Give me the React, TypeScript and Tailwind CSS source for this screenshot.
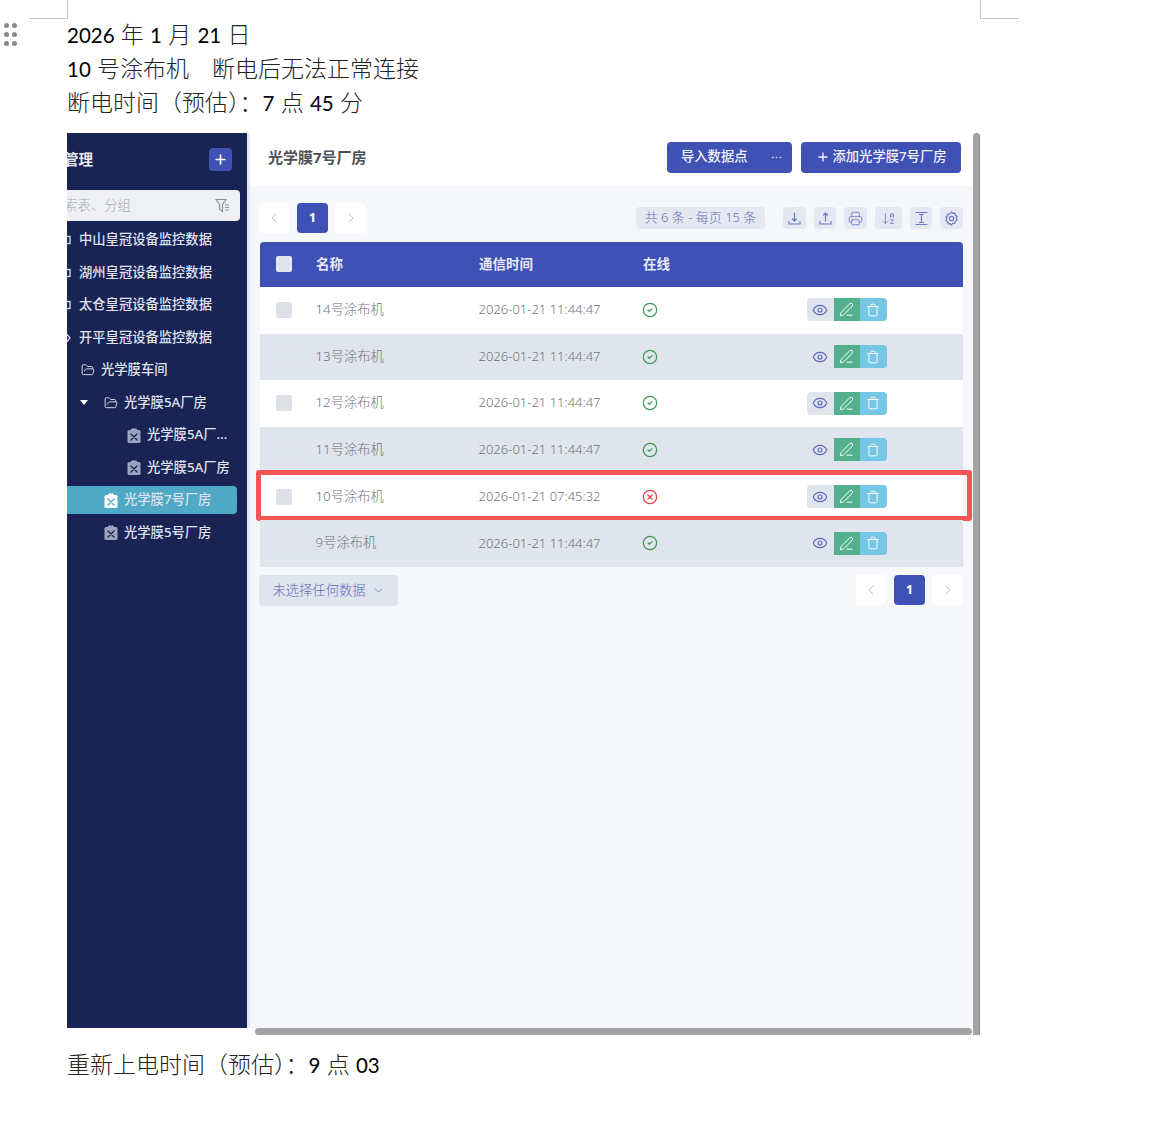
import {
  ArrowDownAZ,
  ChevronDown,
  ChevronLeft,
  ChevronRight,
  CircleCheck,
  CircleX,
  Ellipsis,
  Eye,
  FolderOpen,
  PenLine,
  Plus,
  Printer,
  Trash,
} from 'lucide-react';

const cjk = "font-['Noto_Sans','Noto_Sans_CJK_SC',sans-serif]";

const machines = [
  {name: '14号涂布机', time: '2026-01-21 11:44:47', online: true},
  {name: '13号涂布机', time: '2026-01-21 11:44:47', online: true},
  {name: '12号涂布机', time: '2026-01-21 11:44:47', online: true},
  {name: '11号涂布机', time: '2026-01-21 11:44:47', online: true},
  {name: '10号涂布机', time: '2026-01-21 07:45:32', online: false},
  {name: '9号涂布机', time: '2026-01-21 11:44:47', online: true},
];

function Num({children}: {children: React.ReactNode}) {
  return <span className="text-[20.5px] leading-none font-normal text-black">{children}</span>;
}

function TaskIcon({active}: {active?: boolean}) {
  const x = active ? '#4fa9c6' : '#1a2454';
  const fill = active ? '#ffffff' : '#9ea3be';
  return (
    <svg width="14" height="15" viewBox="0 0 14 15" className="shrink-0">
      <rect x="0.5" y="2" width="13" height="13" rx="1.5" fill={fill} />
      <rect x="4" y="0.5" width="6" height="3" rx="1" fill={fill} />
      <path d="M4 6l6 6M10 6l-6 6" stroke={x} strokeWidth="1.4" strokeLinecap="round" />
    </svg>
  );
}

function Folder() {
  return <FolderOpen size={14} strokeWidth={1.6} className="shrink-0 text-[#dfe2ee]" />;
}

function ClippedIcon({arrow}: {arrow?: boolean}) {
  return (
    <svg width="14" height="14" viewBox="0 0 14 14" fill="none" stroke="#dfe2ee" strokeWidth="1.3" className="shrink-0">
      {arrow ? <path d="M5 3.5h5l3 3.5-3 3.5H5z" /> : <rect x="5" y="3.5" width="8" height="7" />}
    </svg>
  );
}

function TreeLabel({children}: {children: React.ReactNode}) {
  return <span className="text-[13.3px] font-medium text-[#dfe2ee] whitespace-nowrap">{children}</span>;
}

function Sidebar() {
  return (
    <aside className="w-[180px] shrink-0 bg-[#1a2454] overflow-hidden">
      <div className="h-[57px] flex items-center justify-between pr-[15px] pb-[4px]">
        <span className="text-[14.5px] font-bold text-[#e8eaf4] -ml-[3px]">管理</span>
        <span className="w-[23px] h-[23px] rounded bg-[#3f51b5] flex items-center justify-center">
          <Plus size={15} strokeWidth={2.6} className="text-white" />
        </span>
      </div>
      <div className="w-[173px] h-[31px] bg-[#eef0f3] rounded-r flex items-center justify-between pr-[9px] overflow-hidden">
        <span className="text-[13.3px] text-[#a9acb3] whitespace-nowrap -ml-[16px]">搜索表、分组</span>
        <svg width="16" height="15" viewBox="0 0 16 15" fill="none" stroke="#8d9097" strokeWidth="1.2">
          <path d="M1 1.5h10L7.5 6.5v7l-3-2v-5z" />
          <path d="M10 7h4M10 9.5h4M10 12h4" />
        </svg>
      </div>
      <div className="pt-[3px] flex flex-col">
        {['中山皇冠设备监控数据', '湖州皇冠设备监控数据', '太仓皇冠设备监控数据', '开平皇冠设备监控数据'].map((label, i) => (
          <div key={label} className="h-[32.5px] flex items-center gap-[8px] -ml-[10px]">
            <ClippedIcon arrow={i === 3} />
            <TreeLabel>{label}</TreeLabel>
          </div>
        ))}
        <div className="h-[32.5px] flex items-center gap-[6px] pl-[14px]">
          <Folder />
          <TreeLabel>光学膜车间</TreeLabel>
        </div>
        <div className="h-[32.5px] flex items-center gap-[6px] pl-[13px]">
          <span className="w-[18px] flex">
            <span className="w-0 h-0 border-x-[4px] border-x-transparent border-t-[5px] border-t-white" />
          </span>
          <Folder />
          <TreeLabel>光学膜5A厂房</TreeLabel>
        </div>
        <div className="h-[32.5px] flex items-center gap-[6px] pl-[60px]">
          <TaskIcon />
          <TreeLabel>光学膜5A厂…</TreeLabel>
        </div>
        <div className="h-[32.5px] flex items-center gap-[6px] pl-[60px]">
          <TaskIcon />
          <TreeLabel>光学膜5A厂房</TreeLabel>
        </div>
        <div className="h-[32.5px] flex items-center">
          <div className="w-[170px] h-[28px] bg-[#4fa9c6] rounded-r flex items-center gap-[6px] pl-[37px]">
            <TaskIcon active />
            <TreeLabel>光学膜7号厂房</TreeLabel>
          </div>
        </div>
        <div className="h-[32.5px] flex items-center gap-[6px] pl-[37px]">
          <TaskIcon />
          <TreeLabel>光学膜5号厂房</TreeLabel>
        </div>
      </div>
    </aside>
  );
}

function Pager() {
  return (
    <div className="flex">
      <span className="w-[30px] h-[30px] bg-white rounded flex items-center justify-center mr-[8px]">
        <ChevronLeft size={16} strokeWidth={1.4} className="text-[#b9bcc3]" />
      </span>
      <span className="w-[31px] h-[30px] bg-[#3f51b5] rounded flex items-center justify-center text-[13px] font-bold text-white mr-[7px]">
        1
      </span>
      <span className="w-[31px] h-[30px] bg-white rounded flex items-center justify-center">
        <ChevronRight size={16} strokeWidth={1.4} className="text-[#b9bcc3]" />
      </span>
    </div>
  );
}

function ToolIcon({w, children}: {w: string; children: React.ReactNode}) {
  return <span className={`${w} h-[22px] rounded bg-[#e5e8f0] flex items-center justify-center text-[#6b79c6]`}>{children}</span>;
}

function Toolbar() {
  const stroke = {fill: 'none', stroke: 'currentColor', strokeWidth: 1.2, strokeLinecap: 'round', strokeLinejoin: 'round'} as const;
  return (
    <div className="h-[56px] pt-[17px] flex items-start justify-between pr-[17px] -ml-[1px]">
      <Pager />
      <div className="flex items-center h-[30px]">
        <span className="w-[129px] h-[22px] rounded bg-[#e5e8f0] text-[13px] text-[#6672b6] flex items-center justify-center mr-[18px]">
          共 6 条 - 每页 15 条
        </span>
        <div className="flex gap-[8px]">
          <ToolIcon w="w-[23px]">
            <svg width="15" height="15" viewBox="0 0 15 15" {...stroke}>
              <path d="M7.5 2v8M5.5 8l2 2 2-2M2 10.5V13h11v-2.5" />
            </svg>
          </ToolIcon>
          <ToolIcon w="w-[22px]">
            <svg width="15" height="15" viewBox="0 0 15 15" {...stroke}>
              <path d="M7.5 10V2M5.5 4l2-2 2 2M2 10.5V13h11v-2.5" />
            </svg>
          </ToolIcon>
          <ToolIcon w="w-[23px]">
            <Printer size={15} strokeWidth={1.3} />
          </ToolIcon>
          <ToolIcon w="w-[27px]">
            <ArrowDownAZ size={15} strokeWidth={1.3} />
          </ToolIcon>
          <ToolIcon w="w-[22px]">
            <svg width="15" height="15" viewBox="0 0 15 15" {...stroke}>
              <path d="M2 1.5h11M2 13.5h11M7.5 3.5v8M5.5 3.5h4M5.5 11.5h4" />
            </svg>
          </ToolIcon>
          <ToolIcon w="w-[23px]">
            <svg width="15" height="15" viewBox="0 0 15 15" {...stroke}>
              <path d="M7.5 1l1.4 1.4 2-.2.5 2 1.7 1.1-.8 1.9.8 1.9-1.7 1.1-.5 2-2-.2L7.5 14l-1.4-1.4-2 .2-.5-2-1.7-1.1.8-1.9-.8-1.9 1.7-1.1.5-2 2 .2z" />
              <circle cx="7.5" cy="7.5" r="2.2" />
            </svg>
          </ToolIcon>
        </div>
      </div>
    </div>
  );
}

function Row({name, time, online, striped}: {name: string; time: string; online: boolean; striped: boolean}) {
  const isDown = !online;
  return (
    <div className={`relative h-[46.7px] pb-[1px] flex items-center text-[13px] text-[#6f737b] ${striped ? 'bg-[#e0e4ec]' : 'bg-white'}`}>
      <span className="w-[56px] pl-[16px] shrink-0">
        <span className={`block w-[16px] h-[16px] rounded-[2px] ${striped ? 'bg-[#dfe3ea]' : 'bg-[#dde1e7]'}`} />
      </span>
      <span className="w-[163px] shrink-0 text-[13.3px] -ml-[0.5px]">{name}</span>
      <span className="w-[164px] shrink-0">{time}</span>
      <span className="w-[164px] shrink-0">
        {online ? (
          <CircleCheck size={16} strokeWidth={1.8} className="text-[#3f9a5a] -ml-[0.5px]" />
        ) : (
          <CircleX size={16} strokeWidth={1.8} className="text-[#e8414f] -ml-[0.5px]" />
        )}
      </span>
      <span className="flex h-[23px] rounded overflow-hidden">
        <span className="w-[27px] bg-[#e0e4ec] flex items-center justify-center">
          <Eye size={16} strokeWidth={1.8} className="text-[#5c6bc0]" />
        </span>
        <span className="w-[26px] bg-[#52b08c] flex items-center justify-center">
          <PenLine size={15} strokeWidth={1.6} className="text-white" />
        </span>
        <span className="w-[27px] bg-[#76c7e6] flex items-center justify-center">
          <Trash size={14} strokeWidth={1.6} className="text-white" />
        </span>
      </span>
      {isDown && (
        <span className="absolute left-[-4px] right-[-9px] top-[-4px] bottom-[-1px] border-[5px] border-[#f25555] rounded-[3px]" />
      )}
    </div>
  );
}

function Main() {
  return (
    <main className="flex-1 border-l-[3px] border-[#e4e7f2] bg-[#f5f7fb] flex flex-col">
      <header className="h-[53px] bg-white flex items-center justify-between pl-[18px] pr-[19px] pb-[5px]">
        <h1 className="text-[15px] font-bold text-[#4c5058]">光学膜7号厂房</h1>
        <div className="flex gap-[9px] text-[13.3px] font-medium text-[#f0f1fa]">
          <span className="w-[125px] h-[31px] bg-[#3f51b5] rounded flex items-center justify-between px-[9px] pl-[14px]">
            导入数据点
            <Ellipsis size={13} strokeWidth={1.4} className="text-[#c5cbea]" />
          </span>
          <span className="w-[160px] h-[31px] bg-[#3f51b5] rounded flex items-center justify-center gap-[3px]">
            <Plus size={14} strokeWidth={2.4} />
            添加光学膜7号厂房
          </span>
        </div>
      </header>
      <div className="flex-1 pl-[10px] flex flex-col">
        <Toolbar />
        <div className="w-[703px]">
          <div className="h-[45px] pb-[1px] bg-[#3f51b5] rounded-t flex items-center text-[13.5px] font-bold text-[#e6e9f6]">
            <span className="w-[56px] pl-[16px] shrink-0">
              <span className="block w-[16px] h-[16px] rounded-[2px] bg-[#e0e4ec]" />
            </span>
            <span className="w-[163px] shrink-0">名称</span>
            <span className="w-[164px] shrink-0">通信时间</span>
            <span>在线</span>
          </div>
          {machines.map((m, i) => (
            <Row key={m.name} {...m} striped={i % 2 === 1} />
          ))}
        </div>
        <div className="w-[704px] mt-[8px] -ml-[1px] flex justify-between">
          <span className="w-[139px] h-[31px] bg-[#e0e4ec] rounded flex items-center justify-center gap-[6px] text-[13.3px] text-[#5c6bc0]">
            未选择任何数据
            <ChevronDown size={13} strokeWidth={1.4} />
          </span>
          <Pager />
        </div>
      </div>
    </main>
  );
}

export default function App() {
  return (
    <div className={`relative w-[1155px] h-[1122px] bg-white overflow-hidden ${cjk}`}>
      <span className="absolute left-[29px] top-0 w-[39px] h-[19px] border-r border-b border-[#c8c8c8]" />
      <span className="absolute left-[980px] top-0 w-[39px] h-[19px] border-l border-b border-[#c8c8c8]" />
      <div className="absolute left-[4px] top-[23px] grid grid-cols-2 gap-x-[3px] gap-y-[4px]">
        {[0, 1, 2, 3, 4, 5].map((d) => (
          <span key={d} className="w-[5px] h-[5px] rounded-full bg-[#8a8a8a]" />
        ))}
      </div>

      <div className="pl-[67px] pt-[17px] text-[23px] leading-[34px] text-[#222] font-['Lato','Noto_Sans_CJK_SC',sans-serif] font-light">
        <p className="h-[34px]">
          <Num>2026</Num> 年 <Num>1</Num> 月 <Num>21</Num> 日
        </p>
        <p className="h-[34px]">
          <Num>10</Num> 号涂布机　断电后无法正常连接
        </p>
        <p className="h-[34px]">
          断电时间（预估）：<Num>7</Num> 点 <Num>45</Num> 分
        </p>

        <div className={`relative mt-[14px] w-[913px] h-[902px] leading-normal ${cjk}`}>
          <div className="flex h-[895px]">
            <Sidebar />
            <Main />
          </div>
          <span className="absolute left-[188px] right-[8px] bottom-0 h-[7px] rounded-full bg-[#a3a3a3]" />
          <span className="absolute right-0 top-0 bottom-0 w-[7px] border-r border-[#8f8f8f] bg-[#a3a3a3] rounded-t" />
        </div>

        <p className="mt-[12px] h-[34px]">
          重新上电时间（预估）：<Num>9</Num> 点 <Num>03</Num>
        </p>
      </div>
    </div>
  );
}
